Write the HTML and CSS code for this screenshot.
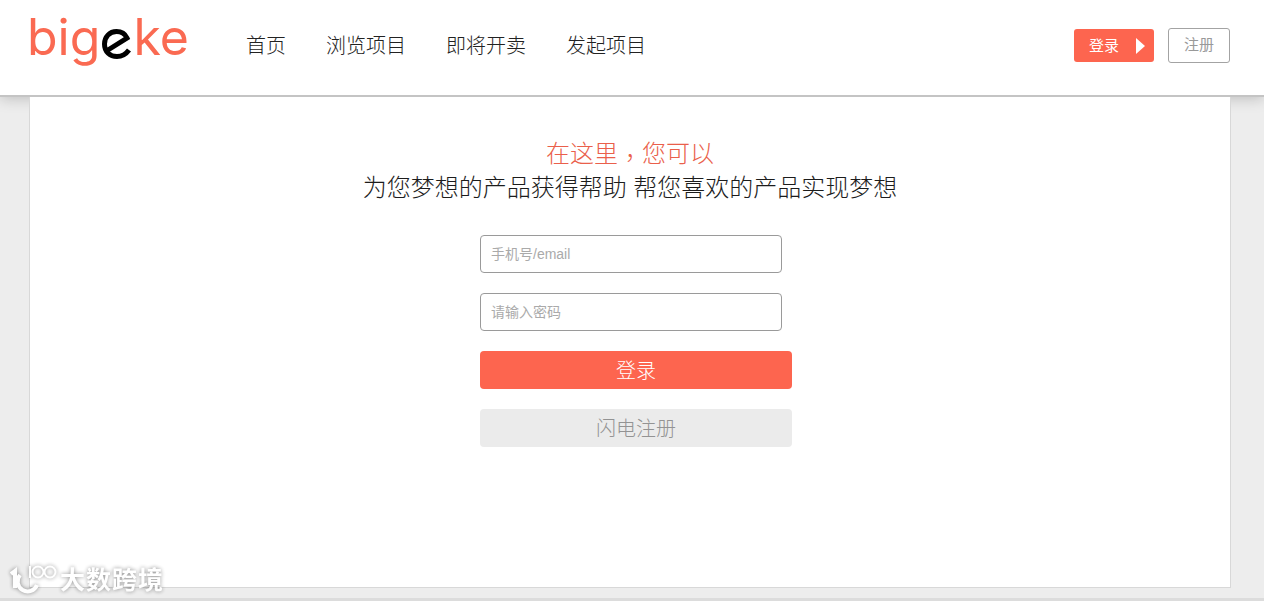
FILE: index.html
```html
<!DOCTYPE html>
<html lang="zh">
<head>
<meta charset="utf-8">
<title>bigeke 登录</title>
<link rel="stylesheet" href="styles.css">
</head>
<body>
<header class="topbar">
  <a class="logo" href="#"><span class="logo-word">big</span><svg class="logo-e" viewBox="0 0 30 30" width="30" height="30" aria-hidden="true"><path d="M6 21 L25 9 C23 4.5 19 2.5 14.500 2.500 C7.500 2.500 2.500 8 2.500 15 C2.500 23 8 27.500 15 27.500 C20 27.500 24 25 27 21" fill="none" stroke="#000" stroke-width="5"/></svg><span class="logo-word">ke</span></a>
  <nav class="nav">
    <a href="#">首页</a>
    <a href="#">浏览项目</a>
    <a href="#">即将开卖</a>
    <a href="#">发起项目</a>
  </nav>
  <div class="actions">
    <a class="btn-login" href="#">登录<span class="arrow"></span></a>
    <a class="btn-register" href="#">注册</a>
  </div>
</header>
<main class="card">
  <h1 class="headline">在这里<span class="comma" lang="zh-TW">，</span>您可以</h1>
  <p class="subhead">为您梦想的产品获得帮助 帮您喜欢的产品实现梦想</p>
  <form class="form">
    <input class="field" type="text" placeholder="手机号/email">
    <input class="field" type="password" placeholder="请输入密码">
    <button class="submit" type="button">登录</button>
    <button class="flash" type="button">闪电注册</button>
  </form>
</main>
<div class="footer-band"></div>
<div class="watermark">
  <svg class="wm-icon" viewBox="0 0 50 32" width="50" height="32" aria-hidden="true"><g fill="none" stroke="#fff" stroke-width="4"><path d="M1 11 L5 8 V25"/><path d="M10 12 A10 10 0 1 0 27 22"/></g><g fill="none" stroke="#fff" stroke-width="2"><path d="M20 3 V15"/><circle cx="28" cy="9" r="5.500"/><circle cx="40" cy="9" r="5.500"/></g></svg>
  <span class="wm-text">大数跨境</span>
</div>
</body>
</html>
```
FILE: styles.css
```css
* { box-sizing: border-box; }
html, body { margin: 0; padding: 0; }
body {
  height: 601px;
  overflow: hidden;
  position: relative;
  background: #ededed;
  font-family: "Liberation Sans", "Noto Sans CJK SC", sans-serif;
}
a { text-decoration: none; }
.topbar {
  height: 97px;
  background: #fff;
  border-bottom: 2px solid #c4c4c4;
  box-shadow: 0 1px 14px rgba(0,0,0,.22);
  display: flex;
  align-items: flex-start;
  padding: 0 34px 0 29px;
  position: relative;
  z-index: 1;
}
.logo {
  display: flex;
  align-items: baseline;
  width: 217px;
  height: 70px;
  padding-top: 6px;
  color: #fa6a52;
  font-family: "Inter", sans-serif;
  font-size: 50px;
  font-weight: 400;
  line-height: 62px;
}
.logo-word { margin-left: -2px; }
.logo-e { align-self: flex-start; margin: 23px 3px 0 2px; }
.nav {
  display: flex;
  gap: 40px;
  padding-top: 33px;
}
.nav a {
  color: #222;
  font-size: 20px;
  font-weight: 300;
  line-height: 26px;
}
.actions {
  margin-left: auto;
  display: flex;
  gap: 14px;
  padding-top: 28px;
}
.btn-login {
  width: 80px;
  height: 33px;
  margin-top: 1px;
  background: #fd654f;
  border-radius: 3px;
  color: #fff;
  font-size: 15px;
  line-height: 33px;
  padding-left: 15px;
  display: flex;
  align-items: center;
  gap: 17px;
}
.arrow {
  width: 0;
  height: 0;
  border-left: 9px solid #fff;
  border-top: 8px solid transparent;
  border-bottom: 8px solid transparent;
}
.btn-register {
  width: 62px;
  height: 35px;
  border: 1px solid #a3a3a3;
  border-radius: 3px;
  color: #999;
  font-size: 15px;
  line-height: 32px;
  text-align: center;
}
.card {
  width: 1202px;
  height: 491px;
  margin: 0 0 0 29px;
  background: #fff;
  border: 1px solid #d8d8d8;
  border-top: 0;
  padding-top: 42px;
  text-align: center;
  position: relative;
  z-index: 2;
}
.headline {
  margin: 0;
  font-size: 24px;
  font-weight: 300;
  line-height: 30px;
  color: #ea5f4b;
}
.comma {
  font-family: "Noto Sans CJK TC", sans-serif;
  line-height: 1;
  vertical-align: -5px;
}
.subhead {
  margin: 4px 0 0;
  font-size: 24px;
  font-weight: 300;
  line-height: 30px;
  color: #1c1c1c;
}
.form {
  width: 312px;
  margin: 32px 0 0 450px;
  display: flex;
  flex-direction: column;
  align-items: flex-start;
  gap: 20px;
}
.field {
  width: 302px;
  height: 38px;
  border: 1px solid #9a9a9a;
  border-radius: 4px;
  padding: 0 10px;
  font-family: inherit;
  font-size: 14px;
  background: #fff;
}
.field::placeholder { color: #aaa; opacity: 1; }
.submit, .flash {
  width: 312px;
  height: 38px;
  border: 0;
  border-radius: 4px;
  font-family: inherit;
  font-size: 20px;
  font-weight: 300;
  padding: 0 0 1px;
}
.submit { background: #fd654f; color: #fff; }
.flash { background: #ebebeb; color: #939393; }
.footer-band {
  height: 3px;
  margin-top: 10px;
  background: #dcdcdc;
}
.watermark {
  position: absolute;
  left: 10px;
  top: 561px;
  display: flex;
  align-items: center;
  z-index: 3;
  opacity: .95;
  filter: drop-shadow(0 0 2px rgba(0,0,0,.45));
}
.wm-text {
  color: #fff;
  font-size: 25px;
  font-weight: 700;
  line-height: 32px;
  letter-spacing: 1px;
  margin: 3px 0 0;
}
```
